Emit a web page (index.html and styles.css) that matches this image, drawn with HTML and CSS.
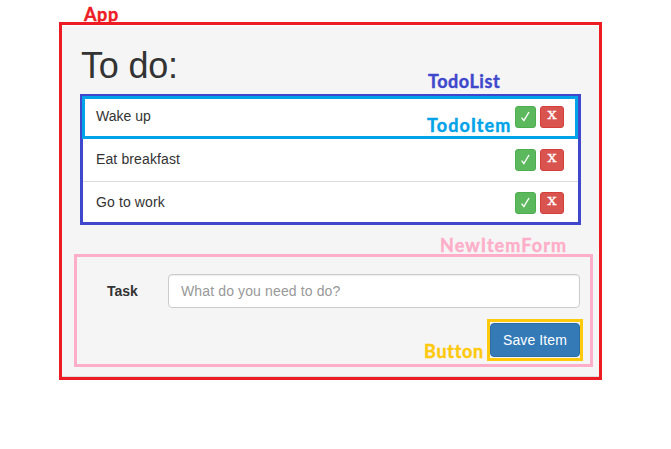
FILE: index.html
```html
<!DOCTYPE html>
<html lang="en">
<head>
<meta charset="utf-8">
<title>To do</title>
<link rel="stylesheet" href="styles.css">
</head>
<body>
<main class="app">
  <span class="tag tag-app">App</span>
  <h1>To do:</h1>
  <section class="list-wrap">
    <span class="tag tag-list">TodoList</span>
    <ul class="list">
      <li class="item item-marked"><span>Wake up</span><span class="tag tag-item">TodoItem</span>
        <button class="btn done" aria-label="Done"><svg width="11" height="12" viewBox="0 0 11 12"><path d="M1.6 6.6 3.9 9.6 9 1"/></svg></button><button class="btn remove"><span>X</span></button></li>
      <li class="item"><span class="wide">Eat breakfast</span>
        <button class="btn done" aria-label="Done"><svg width="11" height="12" viewBox="0 0 11 12"><path d="M1.6 6.6 3.9 9.6 9 1"/></svg></button><button class="btn remove"><span>X</span></button></li>
      <li class="item"><span class="wide">Go to work</span>
        <button class="btn done" aria-label="Done"><svg width="11" height="12" viewBox="0 0 11 12"><path d="M1.6 6.6 3.9 9.6 9 1"/></svg></button><button class="btn remove"><span>X</span></button></li>
    </ul>
  </section>
  <form class="form">
    <span class="tag tag-form">NewItemForm</span>
    <div class="row">
      <label for="task">Task</label>
      <input id="task" type="text" placeholder="What do you need to do?">
    </div>
    <div class="save-wrap">
      <span class="tag tag-button">Button</span>
      <button class="save" type="button">Save Item</button>
    </div>
  </form>
</main>
</body>
</html>
```
FILE: styles.css
```css
* { box-sizing: border-box; }
body {
  margin: 0;
  background: #fff;
  color: #333;
  font: 14px/20px "Liberation Sans", Arial, sans-serif;
}
.app {
  position: relative;
  width: 543px;
  height: 358px;
  margin: 22px 0 0 59px;
  padding: 21px 6px 0 12px;
  border: 3px solid #ed1c24;
  background: #f5f5f5;
  box-shadow: inset 0 2px 1px -1px #fff, inset 0 -1px #ddd;
}
h1 {
  margin: 0 0 9px 7px;
  font-size: 36px;
  font-weight: 400;
  line-height: 39px;
  letter-spacing: -0.2px;
}
.list-wrap {
  position: relative;
  width: 501px;
  height: 131px;
  margin: 0 0 29px 6px;
  border: 3px solid #3f48cc;
  background: #fff;
}
.list { margin: -1px 0 0 -1px; padding: 0; list-style: none; }
.item {
  position: relative;
  display: flex;
  align-items: center;
  width: 496px;
  height: 42px;
  padding: 0 14px;
}
.item > span:first-child { flex: 1; position: relative; top: -1px; }
.item > .wide { letter-spacing: 0.12px; }
.item-marked {
  height: 43px;
  padding: 0 11px 2px;
  border: 3px solid #00a2e8;
}
.item + .item + .item { height: 43px; border-top: 1px solid #ddd; margin-left: 1px; width: 495px; padding-left: 13px; }
.btn {
  display: flex;
  align-items: center;
  justify-content: center;
  height: 22px;
  padding: 0;
  border: 1px solid;
  border-radius: 3px;
  color: #fff;
  font: 11px/18px "DejaVu Serif", serif;
}
.done { width: 21px; margin-right: 4px; background: #5cb85c; border-color: #4cae4c; }
.done path { fill: none; stroke: #fff; stroke-width: 1.4; }
.remove { width: 24px; padding: 0 1px 2px 0; background: #d9534f; border-color: #d43f3a; -webkit-text-stroke: 0.4px #fff; }
.remove span { transform: scaleX(1.15); }
.form {
  position: relative;
  width: 519px;
  height: 113px;
  border: 3px solid #ffaec9;
  padding: 17px 10px 0 30px;
}
.row { display: flex; align-items: center; }
label { width: 61px; font-weight: 700; }
input {
  width: 412px;
  height: 34px;
  padding: 6px 12px;
  border: 1px solid #ccc;
  border-radius: 4px;
  background: #fff;
  box-shadow: inset 0 1px 1px rgba(0,0,0,.075);
  font: inherit;
  letter-spacing: 0.13px;
}
input::placeholder { color: #999; opacity: 1; }
.save-wrap {
  position: relative;
  width: 96px;
  height: 42px;
  margin: 11px -3px 0 auto;
  padding-top: 1px;
  border: 3px solid #ffc90e;
}
.save {
  display: block;
  width: 90px;
  height: 34px;
  padding: 0;
  border: 1px solid #2e6da4;
  border-radius: 4px;
  background: #337ab7;
  color: #fff;
  font: inherit;
  letter-spacing: 0.1px;
}
.tag {
  position: absolute;
  font: 700 18px/24px Lato, "Open Sans", sans-serif;
  -webkit-text-stroke: 0.4px currentColor;
  white-space: nowrap;
}
.tag-app { left: 22px; top: -23px; color: #ed1c24; letter-spacing: 0.6px; }
.tag-list { left: 345px; top: -28px; color: #3f48cc; letter-spacing: 0.55px; }
.tag-item { left: 342px; top: 14px; color: #00a2e8; letter-spacing: 1.1px; }
.tag-form { left: 363px; top: -24px; color: #ffaec9; letter-spacing: 1.1px; }
.tag-button { left: -66px; top: 17px; color: #ffc90e; letter-spacing: 0.7px; }
```
